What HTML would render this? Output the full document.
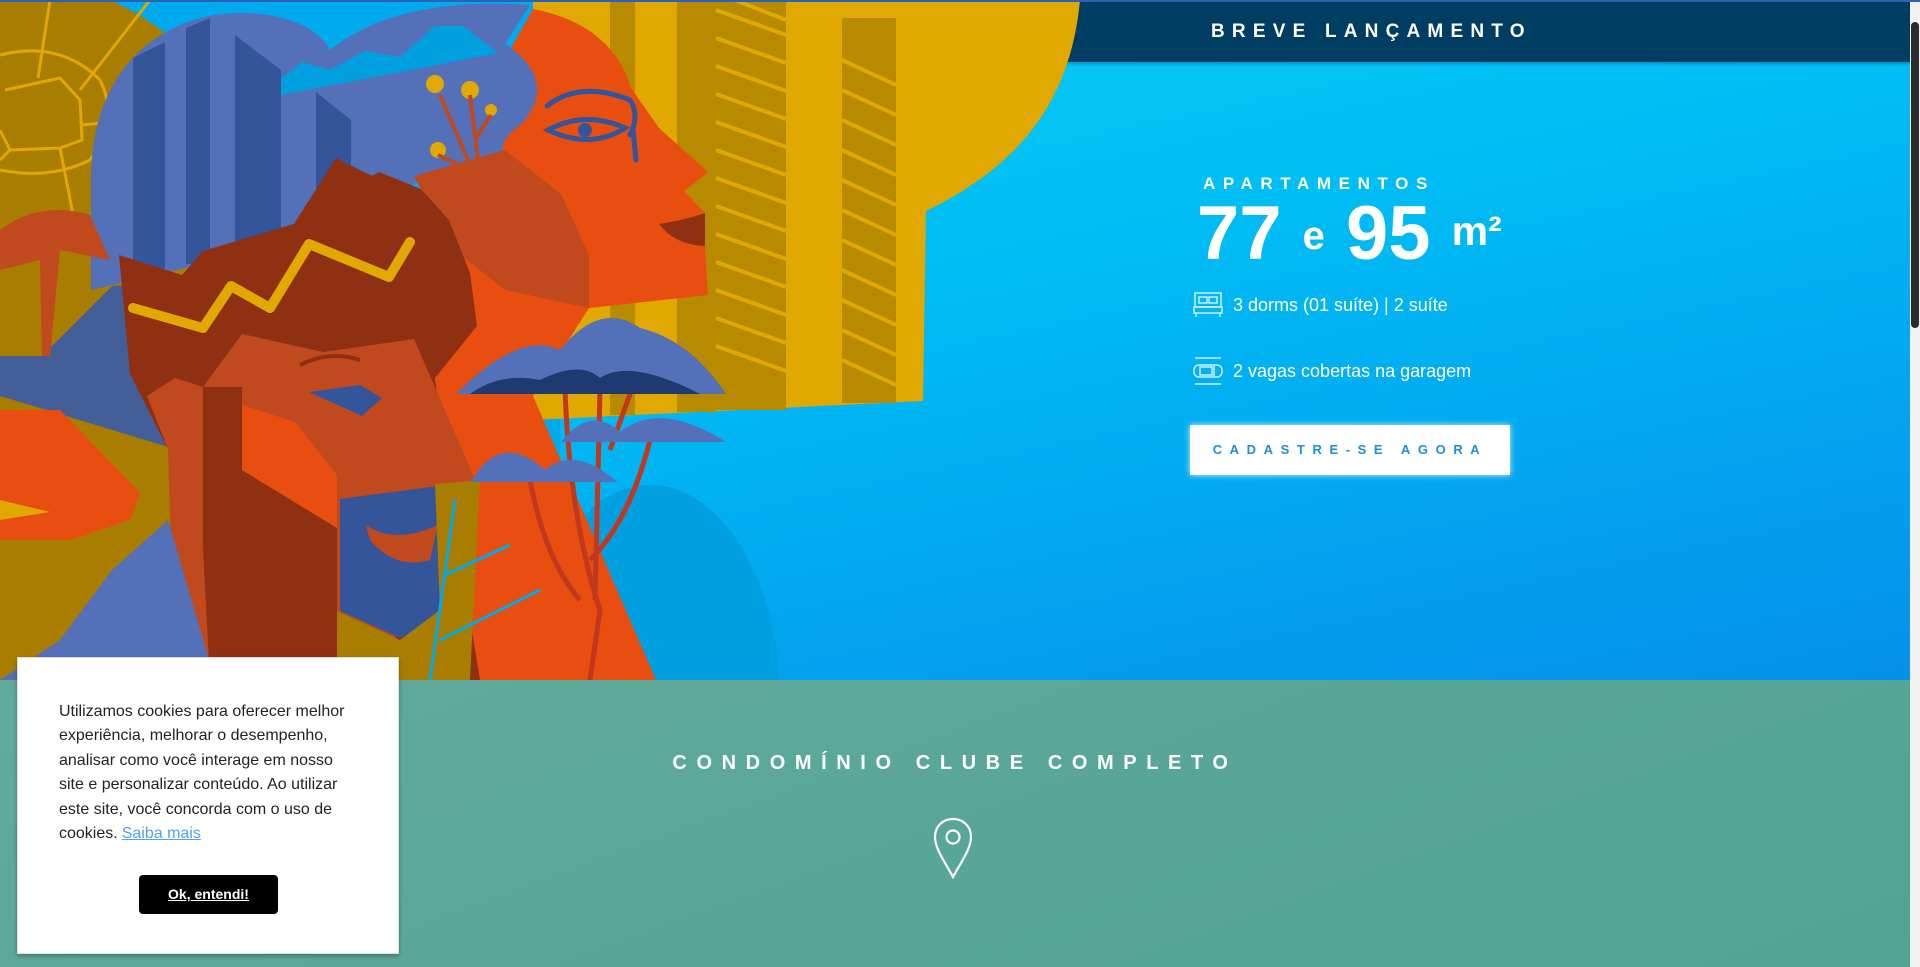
<!DOCTYPE html>
<html><head><meta charset="utf-8"><style>
*{margin:0;padding:0;box-sizing:border-box}
body{width:1920px;height:967px;overflow:hidden;font-family:"Liberation Sans",sans-serif;position:relative;background:#fff}
#hero{position:absolute;left:0;top:0;width:1910px;height:680px;background:linear-gradient(168deg,#0bd3f6 0%,#00bcf4 45%,#0590ea 100%);overflow:hidden}
#topline{position:absolute;left:0;top:0;width:1920px;height:2px;background:#2a62b8;z-index:5}
#band{position:absolute;left:1040px;top:0;width:870px;height:62px;background:#003d63;box-shadow:0 2px 3px rgba(0,0,0,.25)}
#band span{position:absolute;left:171px;top:21px;color:#fff;font-weight:bold;font-size:19px;letter-spacing:7.2px}
svg.ill{position:absolute;left:0;top:0}
.txt{position:absolute;color:#fff}
#apt{left:1203px;top:174px;font-weight:bold;font-size:17px;letter-spacing:7.6px}
#big{left:1197px;top:190px;font-size:76px;font-weight:bold;white-space:nowrap}
#big .e{font-size:40px;position:relative;top:-10px}
#big .m{font-size:41px;position:relative;top:-14px}
.feat{position:absolute;left:1193px;color:#fff;font-size:18px;display:flex;align-items:center}
.feat svg{margin-right:10px}
#btn{position:absolute;left:1190px;top:425px;width:320px;height:50px;background:#fff;box-shadow:0 0 6px rgba(255,255,255,.8);color:#1b8fd8;font-weight:bold;font-size:13px;letter-spacing:7.6px;text-align:center;line-height:50px}
#green{position:absolute;left:0;top:680px;width:1910px;height:287px;background:linear-gradient(160deg,#62aa9c,#50a393)}
#gt{position:absolute;left:0;width:1910px;top:752px;text-align:center;color:#fff;font-weight:bold;font-size:20px;letter-spacing:9.6px;text-indent:0px}
#scroll{position:absolute;left:1910px;top:0;width:10px;height:967px;background:#f1f1f1}
#scroll div{position:absolute;left:1px;top:22px;width:8px;height:306px;background:#2b2b2b;border-radius:4px}
#cookie{position:absolute;left:17px;top:657px;width:382px;height:297px;background:#fff;border:1px solid #ddd;box-shadow:0 2px 4px rgba(0,0,0,.3);z-index:4}
#cookie p{position:absolute;left:41px;top:42px;width:300px;font-family:Arial,"Liberation Sans",sans-serif;font-size:16px;line-height:24.4px;color:#222}
#cookie a{color:#4da3f5;text-decoration:underline;margin-left:4px}
#ok{position:absolute;left:121px;top:217px;width:139px;height:39px;background:#000;border-radius:4px;color:#fff;font-weight:bold;font-size:14px;text-align:center;line-height:39px;text-decoration:underline}
</style></head><body>
<div id="topline"></div>
<div id="hero">
<div id="band"><span>BREVE LANÇAMENTO</span></div>
<svg class="ill" width="1100" height="680" viewBox="0 0 1100 680">
<rect x="0" y="0" width="560" height="680" fill="#00aaee"/>
<path d="M0 0 L110 0 Q200 40 250 140 L250 680 L0 680Z" fill="#a87d00"/>
<g fill="none" stroke="#e0a800" stroke-width="3">
<path d="M5 90 L60 78 L80 100 L82 140 L60 148 L10 150 L0 130"/>
<path d="M50 0 L38 78 M80 90 L150 0 M82 125 L130 120 M60 148 L80 250 M10 150 L0 160"/>
<path d="M0 55 Q60 40 100 80 Q120 120 90 160 Q50 180 0 170"/>
</g>
<path d="M533 0 L1080 0 C1070 110 1010 170 926 211 L923 401 L533 420Z" fill="#e0a800"/>
<g fill="#b88a00">
<rect x="610" y="0" width="25" height="415"/><rect x="677" y="0" width="39" height="412"/>
<rect x="716" y="0" width="70" height="410"/><rect x="842" y="18" width="54" height="385"/>
</g>
<g stroke="#e0a800" stroke-width="4">
<path d="M716 10 L786 35 M716 38 L786 63 M716 66 L786 91 M716 94 L786 119 M716 122 L786 147 M716 150 L786 175 M716 178 L786 203 M716 206 L786 231 M716 234 L786 259 M716 262 L786 287 M716 290 L786 315 M716 318 L786 343 M716 346 L786 371"/>
<path d="M842 60 L896 85 M842 90 L896 115 M842 120 L896 145 M842 150 L896 175 M842 180 L896 205 M842 210 L896 235 M842 240 L896 265 M842 270 L896 295 M842 300 L896 325 M842 330 L896 355 M842 360 L896 385"/>
<path d="M735 0 L786 20"/>
</g>
<ellipse cx="650" cy="700" rx="130" ry="215" fill="#00a0e0"/>
<path d="M533 9 C590 20 620 50 631 88 L659 128 L708 172 L684 191 L705 213 L705 246 L708 295 L589 308 L533 396 L656 680 L456 680 L430 300 L470 120Z" fill="#e84e10"/>
<path d="M91 180 C91 60 170 13 240 13 C290 13 320 30 330 50 C380 10 450 0 530 5 L505 44 C545 70 545 100 520 125 C500 140 500 150 505 160 L420 180 L350 230 L91 290Z" fill="#5470b8"/>
<path d="M281 95 L281 79 L302 62 L330 70 L365 51 L400 57 L435 26 L463 26 L498 53Z" fill="#00a0e0"/>
<g fill="#34559a">
<path d="M133 58 L165 42 L165 273 L133 273Z"/><path d="M186 28 L210 18 L210 264 L186 264Z"/>
<path d="M235 35 L281 70 L281 246 L235 246Z"/><path d="M316 92 L351 120 L351 198 L316 198Z"/>
</g>
<path d="M414 176 L505 150 L561 194 L589 255 L589 308 L505 290 L449 246Z" fill="#c04a1e"/>
<g fill="#e0a800"><circle cx="435" cy="84" r="9"/><circle cx="470" cy="90" r="9"/><circle cx="491" cy="110" r="6"/><circle cx="438" cy="150" r="8"/></g>
<path d="M440 95 L470 165 M470 95 L478 160 M491 115 L475 140 M438 155 L470 170" stroke="#c04a1e" stroke-width="4"/>
<path d="M0 356 L42 356 L112 286 L175 282 L175 449 L0 396Z" fill="#445f98"/>
<path d="M0 410 L60 410 L140 493 L130 520 L70 540 L0 540Z" fill="#e84e10"/>
<path d="M0 500 L50 512 L0 520Z" fill="#e0a800"/>
<path d="M0 230 Q40 200 90 215 L110 260 L60 250 L50 356 L42 356 L40 260 L0 270Z" fill="#c04a1e"/>
<path d="M119 255 L182 275 L203 251 L294 224 L336 158 L372 176 L379 172 L421 189 L449 220 L470 273 L477 326 L435 378 L449 488 L480 680 L210 680 L168 449 L130 374Z" fill="#8f3013"/>
<path d="M242 334 L323 352 L414 339 L477 484 L449 616 L393 638 L337 611 L337 680 L175 680 L168 449 L147 396 L175 378 L203 387Z" fill="#c04a1e"/>
<path d="M203 387 L242 387 L242 470 L337 528 L337 611 L337 680 L210 680 L203 550Z" fill="#8f3013"/>
<path d="M242 405 L295 422 L337 475 L337 528 L242 470Z" fill="#e84e10"/>
<path d="M340 499 L438 486 L449 616 L400 638 L340 611Z" fill="#34559a"/>
<path d="M366 525 Q395 545 438 525 L430 560 Q395 570 370 540Z" fill="#c04a1e"/>
<path d="M309 392 L360 385 L382 398 L362 416Z" fill="#34559a"/>
<path d="M300 365 Q330 350 360 360" stroke="#8f3013" stroke-width="4" fill="none"/>
<path d="M0 680 L60 640 L112 570 L168 520 L215 680Z" fill="#5470b8"/>
<path d="M435 484 L480 480 L470 680 L337 680 L337 611 L400 640 L440 610Z" fill="#a87d00"/>
<path d="M455 500 L430 680 M445 575 L510 545 M440 640 L540 590" stroke="#00aaee" stroke-width="3" fill="none"/>
<polyline points="133,308 203,328 231,286 270,308 309,244 389,277 410,242" fill="none" stroke="#e0a800" stroke-width="10" stroke-linejoin="round" stroke-linecap="round"/>
<g fill="none" stroke="#34559a" stroke-width="5" stroke-linecap="round">
<path d="M547 106 Q580 80 630 100 Q640 115 630 135"/>
<path d="M548 130 Q585 110 625 128 Q590 150 548 130Z"/>
<path d="M633 130 L636 160"/>
</g>
<circle cx="585" cy="130" r="7" fill="#34559a"/>
<path d="M659 224 Q685 220 705 213 L705 246 Q675 245 659 224Z" fill="#8f3013"/>
<g stroke="#c0391e" stroke-width="5" fill="none">
<path d="M565 390 Q570 520 600 610 L590 680 M600 390 L595 600 M635 380 L610 450 M650 440 Q630 520 590 560 M530 480 Q545 560 580 600"/>
</g>
<path d="M456 394 Q520 330 560 350 Q600 300 640 328 Q690 340 726 394Z" fill="#5470b8"/>
<path d="M470 394 Q500 372 540 380 Q580 360 600 378 Q630 358 700 394Z" fill="#1f3a70"/>
<path d="M561 442 Q590 405 620 432 Q660 400 726 442Z" fill="#5470b8"/>
<path d="M471 482 Q500 430 545 470 Q575 445 617 482Z" fill="#5470b8"/>
</svg>
<div class="txt" id="apt">APARTAMENTOS</div>
<div class="txt" id="big">77 <span class="e">e</span> 95 <span class="m">m²</span></div>
<div class="feat" style="top:292px"><svg width="30" height="26" viewBox="0 0 30 26" fill="none" stroke="#cfefff" stroke-width="1.5"><rect x="2" y="1" width="26" height="14"/><rect x="6" y="5" width="8" height="6"/><rect x="16" y="5" width="8" height="6"/><rect x="1" y="15" width="28" height="6"/><path d="M3 21 v4 M27 21 v4"/></svg>3 dorms (01 suíte) | 2 suíte</div>
<div class="feat" style="top:357px"><svg width="30" height="28" viewBox="0 0 30 28" fill="none" stroke="#cfefff" stroke-width="1.5"><path d="M2 1 H28 M2 27 H28"/><rect x="1" y="8" width="28" height="12" rx="5"/><rect x="7" y="10" width="12" height="8"/><path d="M21 9 v10"/></svg>2 vagas cobertas na garagem</div>
<div id="btn">CADASTRE-SE AGORA</div>
</div>
<div id="green"></div>
<div id="gt">CONDOMÍNIO CLUBE COMPLETO</div>
<svg style="position:absolute;left:933px;top:817px" width="40" height="62" viewBox="0 0 40 62" fill="none" stroke="#fff" stroke-width="2.2"><path d="M20 60 C12 45 2 32 2 20 C2 9 10 2 20 2 C30 2 38 9 38 20 C38 32 28 45 20 60Z"/><circle cx="20" cy="20" r="6.5"/></svg>
<div id="scroll"><div></div></div>
<div id="cookie"><p>Utilizamos cookies para oferecer melhor experiência, melhorar o desempenho, analisar como você interage em nosso site e personalizar conteúdo. Ao utilizar este site, você concorda com o uso de cookies.<a>Saiba mais</a></p><div id="ok">Ok, entendi!</div></div>
</body></html>
